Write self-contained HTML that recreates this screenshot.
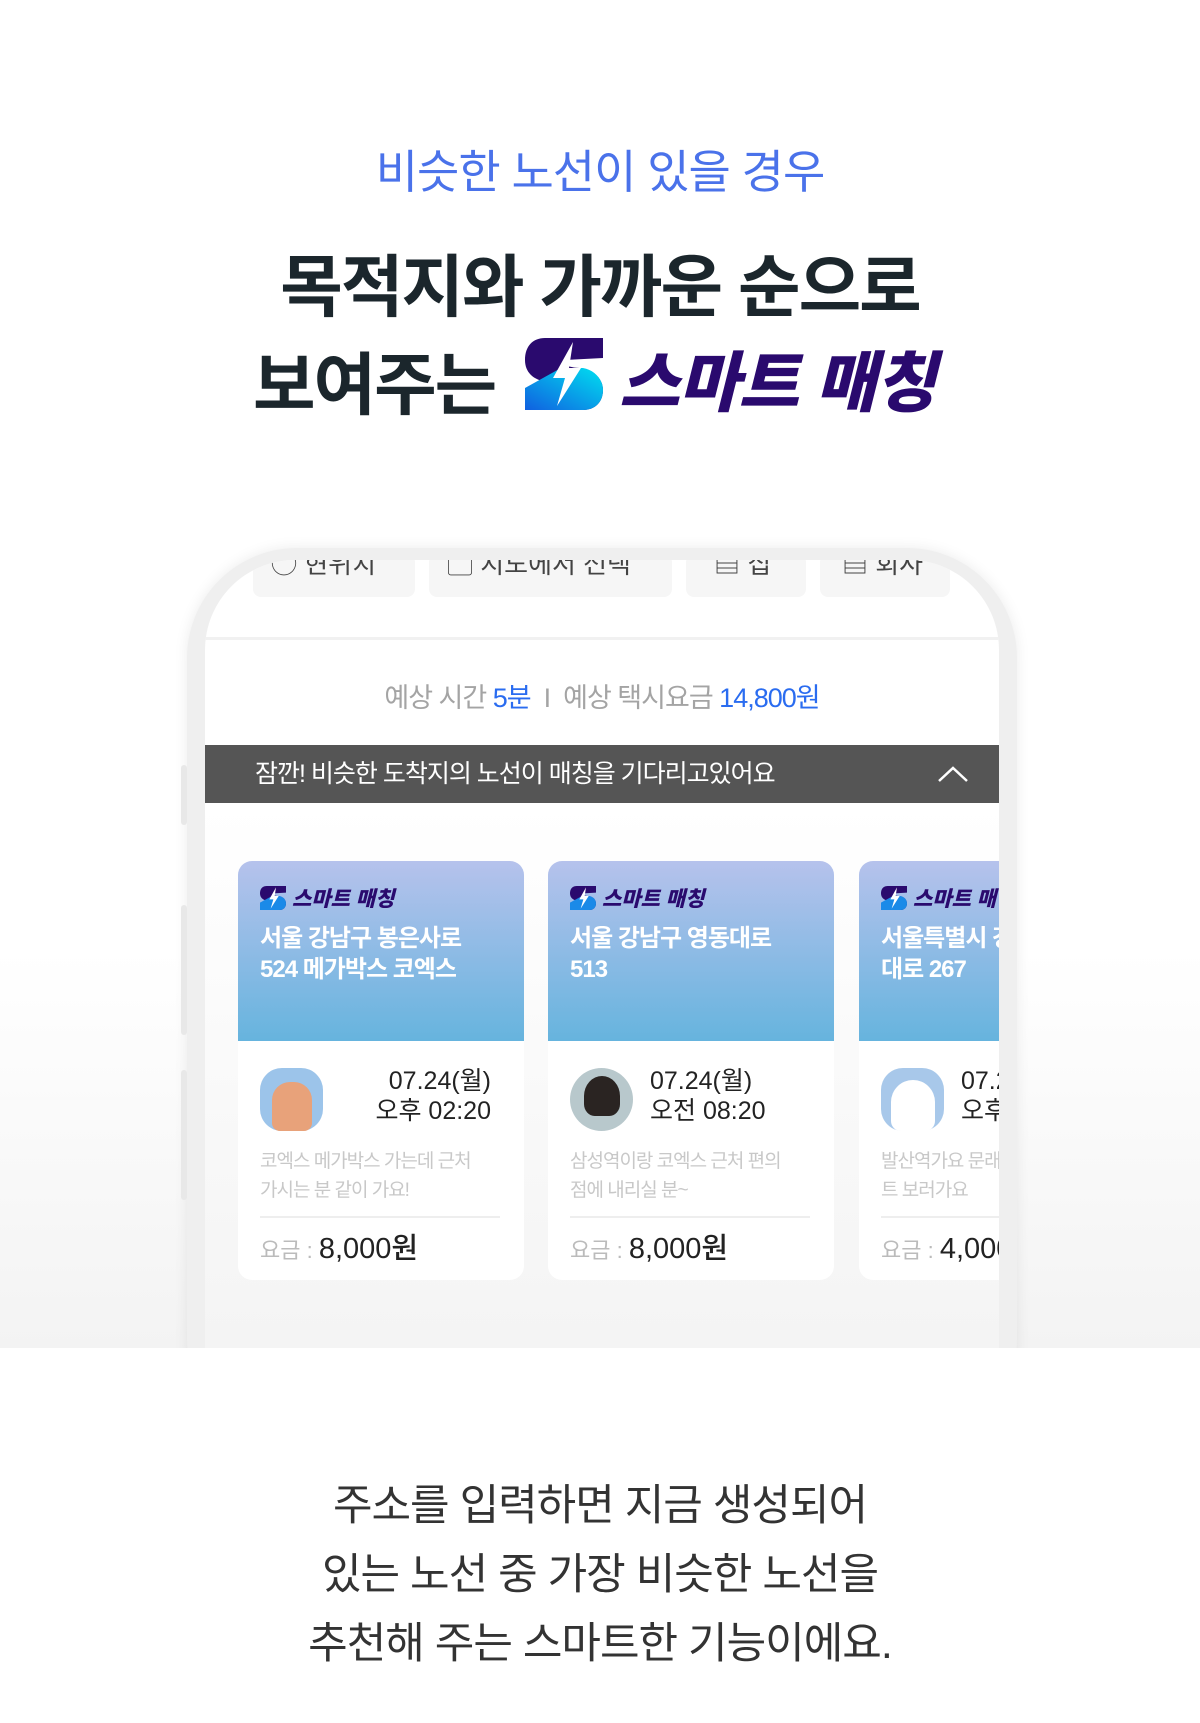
<!DOCTYPE html>
<html><head><meta charset="utf-8">
<style>
*{margin:0;padding:0;box-sizing:border-box}
body{width:1200px;height:1723px;position:relative;overflow:hidden;background:#fff;font-family:"Liberation Sans","Noto Sans CJK KR",sans-serif}
.bg{position:absolute;left:0;top:950px;width:1200px;height:398px;background:linear-gradient(#fff,#f3f3f3)}
.abs{position:absolute}
.c{text-align:center;width:1200px;left:0}
.sm{color:#2a0a6e;font-weight:900;font-style:italic}
.card{position:absolute;top:861px;width:286px;height:419px;background:#fff;border-radius:14px;overflow:hidden}
.grad{height:180px;background:linear-gradient(#b6c2ec,#66b4de);padding:22px 0 0 22px}
.addr{color:#fff;font-weight:700;font-size:24px;line-height:31px;margin-top:10px;letter-spacing:-1px}
.lg{display:flex;align-items:center;gap:6px;font-size:21px}
.av{position:absolute;left:22px;top:207px;width:63px;height:63px;border-radius:22px}
.dt{position:absolute;top:205px;font-size:25px;line-height:30px;color:#222}
.ds{position:absolute;left:22px;top:286px;font-size:19px;line-height:29px;color:#c8c8c8;letter-spacing:-1px}
.ln{position:absolute;left:22px;right:24px;top:355px;border-top:2px solid #eee}
.fr{position:absolute;left:22px;top:364px;font-size:22px;color:#bbb}
.fr b{font-size:29px;color:#222;font-weight:500}
</style></head><body>
<div class="bg"></div>
<div class="abs c" style="top:136px;font-size:46px;color:#4a72ea;letter-spacing:-1px">비슷한 노선이 있을 경우</div>
<div class="abs c" style="top:232px;font-size:68px;font-weight:700;color:#1b262c;letter-spacing:-2px">목적지와 가까운 순으로</div>
<div class="abs" style="left:253px;top:330px;font-size:68px;font-weight:700;color:#1b262c;letter-spacing:-2px;white-space:nowrap">보여주는</div>
<svg class="abs" style="left:525px;top:338px" width="78" height="72" viewBox="0 0 78 72">
<defs><linearGradient id="g" x1="0" y1="1" x2="1" y2="0"><stop offset="0" stop-color="#1060e0"/><stop offset="1" stop-color="#00e0f0"/></linearGradient></defs>
<path d="M20 0H78V20L40 22C34 26 46 30 56 30C70 32 78 42 78 52C78 64 70 72 58 72H0V54L38 52C44 48 32 44 22 44C8 42 0 34 0 22C0 8 8 0 20 0Z" fill="#2a0a6e"/>
<path d="M36 30H58C70 32 78 42 78 52C78 64 70 72 58 72H0V50Z" fill="url(#g)"/>
<path d="M48 4L28 40H40L32 68L56 30H44Z" fill="#fff"/>
</svg>
<div class="abs sm" style="left:619px;top:330px;font-size:66px;white-space:nowrap;letter-spacing:-1px">스마트 매칭</div>

<!-- phone -->
<div class="abs" style="left:187px;top:548px;width:830px;height:900px;border:18px solid #efefef;border-radius:110px;background:#fff;box-shadow:0 0 14px rgba(0,0,0,.08)"></div>
<div class="abs" style="left:181px;top:765px;width:6px;height:60px;background:#e8e8e8;border-radius:3px"></div>
<div class="abs" style="left:181px;top:905px;width:6px;height:130px;background:#e8e8e8;border-radius:3px"></div>
<div class="abs" style="left:181px;top:1070px;width:6px;height:130px;background:#e8e8e8;border-radius:3px"></div>
<div class="abs" style="left:0;top:1348px;width:1200px;height:375px;background:#fff"></div>
<!-- screen -->
<div class="abs" style="left:205px;top:560px;width:794px;height:788px;overflow:hidden;border-radius:90px 90px 0 0;background:#fff">
  <div class="abs" style="left:48px;top:-6px;width:162px;height:43px;background:#f6f6f6;border-radius:8px;font-size:26px;color:#444;padding:0 0 0 18px;line-height:20px">◯ 현위치</div>
  <div class="abs" style="left:224px;top:-6px;width:243px;height:43px;background:#f6f6f6;border-radius:8px;font-size:26px;color:#444;padding-left:18px;line-height:20px">▢ 지도에서 선택</div>
  <div class="abs" style="left:481px;top:-6px;width:120px;height:43px;background:#f6f6f6;border-radius:8px;font-size:26px;color:#444;padding-left:28px;line-height:20px">▤ 집</div>
  <div class="abs" style="left:615px;top:-6px;width:130px;height:43px;background:#f6f6f6;border-radius:8px;font-size:26px;color:#444;padding-left:22px;line-height:20px">▤ 회사</div>
  <div class="abs" style="left:0;top:77px;width:794px;height:3px;background:#f1f1f1"></div>
  <div class="abs" style="left:0;top:116px;width:794px;text-align:center;font-size:27px;color:#a4a4a4;letter-spacing:-1px">예상 시간 <span style="color:#2a6cf0">5분</span> &nbsp;I&nbsp; 예상 택시요금 <span style="color:#2a6cf0">14,800원</span></div>
  <div class="abs" style="left:0;top:185px;width:794px;height:58px;background:#555;color:#fff;font-size:25px;line-height:58px;padding-left:50px;letter-spacing:-1px">잠깐! 비슷한 도착지의 노선이 매칭을 기다리고있어요
   <svg class="abs" style="right:30px;top:20px" width="32" height="18"><path d="M2 16L16 3L30 16" fill="none" stroke="#fff" stroke-width="2.5"/></svg></div>
  <div class="abs" style="left:0;top:243px;width:794px;height:545px;background:linear-gradient(#fff,#f4f4f4)"></div>
</div>
<!-- cards -->
<div class="card" style="left:238px">
  <div class="grad"><div class="lg"><svg width="26" height="24" viewBox="0 0 78 72"><path d="M20 0H78V20L40 22C34 26 46 30 56 30C70 32 78 42 78 52C78 64 70 72 58 72H0V54L38 52C44 48 32 44 22 44C8 42 0 34 0 22C0 8 8 0 20 0Z" fill="#2a0a6e"/><path d="M36 30H58C70 32 78 42 78 52C78 64 70 72 58 72H0V50Z" fill="#1a8ae8"/><path d="M48 4L28 40H40L32 68L56 30H44Z" fill="#fff"/></svg><span class="sm">스마트 매칭</span></div>
  <div class="addr">서울 강남구 봉은사로<br>524 메가박스 코엑스</div></div>
  <div class="av" style="background:#9cc4ea"><div style="margin:14px auto 0;width:40px;height:49px;background:#e8a27a;border-radius:18px 18px 8px 8px"></div></div>
  <div class="dt" style="left:106px;text-align:right;width:147px">07.24(월)<br>오후 02:20</div>
  <div class="ds">코엑스 메가박스 가는데 근처<br>가시는 분 같이 가요!</div>
  <div class="ln"></div>
  <div class="fr">요금 : <b>8,000원</b></div>
</div>
<div class="card" style="left:548px">
  <div class="grad"><div class="lg"><svg width="26" height="24" viewBox="0 0 78 72"><path d="M20 0H78V20L40 22C34 26 46 30 56 30C70 32 78 42 78 52C78 64 70 72 58 72H0V54L38 52C44 48 32 44 22 44C8 42 0 34 0 22C0 8 8 0 20 0Z" fill="#2a0a6e"/><path d="M36 30H58C70 32 78 42 78 52C78 64 70 72 58 72H0V50Z" fill="#1a8ae8"/><path d="M48 4L28 40H40L32 68L56 30H44Z" fill="#fff"/></svg><span class="sm">스마트 매칭</span></div>
  <div class="addr">서울 강남구 영동대로<br>513</div></div>
  <div class="av" style="background:#b8c8cc;border-radius:50%"><div style="margin:8px auto 0;width:36px;height:40px;background:#2a2422;border-radius:50% 50% 30% 30%"></div></div>
  <div class="dt" style="left:102px">07.24(월)<br>오전 08:20</div>
  <div class="ds">삼성역이랑 코엑스 근처 편의<br>점에 내리실 분~</div>
  <div class="ln"></div>
  <div class="fr">요금 : <b>8,000원</b></div>
</div>
<div class="card" style="left:859px;width:140px;border-radius:14px 0 0 14px">
  <div class="grad" style="width:300px"><div class="lg" style="white-space:nowrap"><svg width="26" height="24" viewBox="0 0 78 72"><path d="M20 0H78V20L40 22C34 26 46 30 56 30C70 32 78 42 78 52C78 64 70 72 58 72H0V54L38 52C44 48 32 44 22 44C8 42 0 34 0 22C0 8 8 0 20 0Z" fill="#2a0a6e"/><path d="M36 30H58C70 32 78 42 78 52C78 64 70 72 58 72H0V50Z" fill="#1a8ae8"/><path d="M48 4L28 40H40L32 68L56 30H44Z" fill="#fff"/></svg><span class="sm">스마트 매칭</span></div>
  <div class="addr" style="white-space:nowrap">서울특별시 강남구 테헤란<br>대로 267</div></div>
  <div class="av" style="background:#a8c8ea"><div style="margin:12px auto 0;width:44px;height:51px;background:#fff;border-radius:22px 22px 10px 10px"></div></div>
  <div class="dt" style="left:102px;white-space:nowrap">07.24(월)<br>오후 03:20</div>
  <div class="ds" style="white-space:nowrap">발산역가요 문래동 아파<br>트 보러가요</div>
  <div class="ln" style="right:0"></div>
  <div class="fr" style="white-space:nowrap">요금 : <b>4,000원</b></div>
</div>

<div class="abs c" style="top:1472px;font-size:43px;line-height:69px;color:#333;letter-spacing:-1px">주소를 입력하면 지금 생성되어<br>있는 노선 중 가장 비슷한 노선을<br>추천해 주는 스마트한 기능이에요.</div>
</body></html>
